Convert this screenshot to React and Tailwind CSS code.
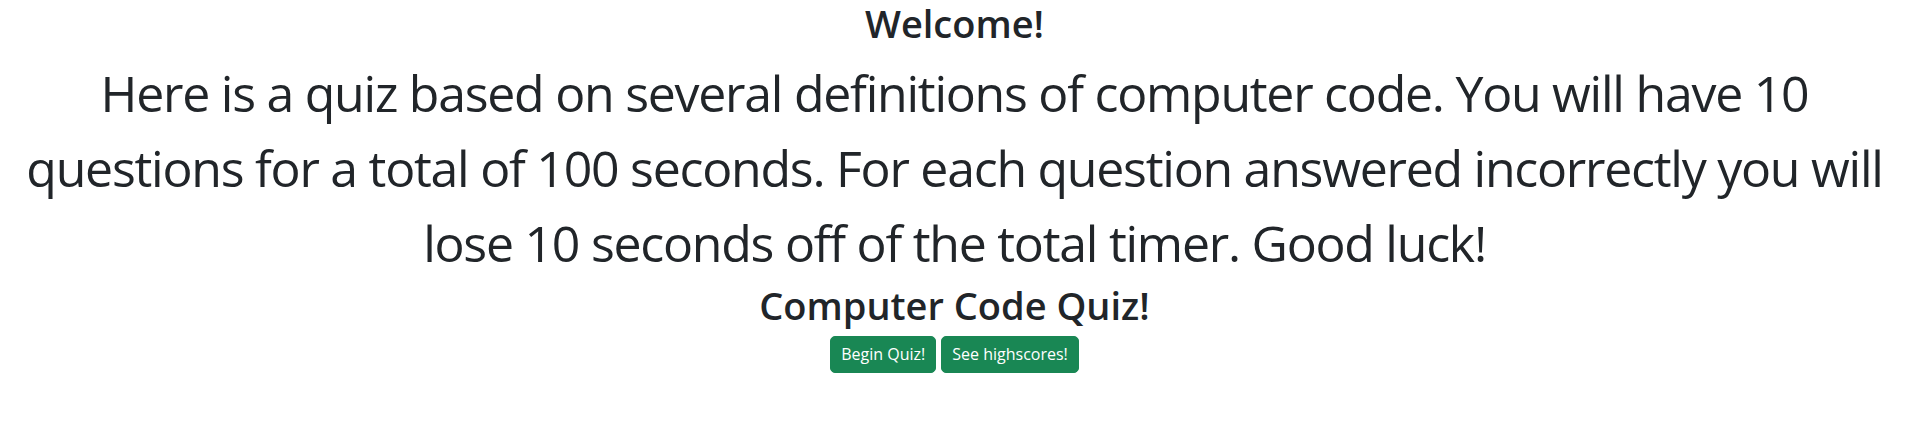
export default function App() {
  return (
    <div className="min-h-screen bg-white text-[#212529] text-center" style={{ fontFamily: '"Open Sans", "Noto Sans", sans-serif' }}>
      <h2 className="pt-[1px] text-[38px] leading-[45px] font-semibold">Welcome!</h2>
      <p className="mt-[10px] text-[50px] leading-[75px] tracking-[-0.025em]">
        Here is a quiz based on several definitions of computer code. You will have 10
        <br />
        questions for a total of 100 seconds. For each question answered incorrectly you will
        <br />
        lose 10 seconds off of the total timer. Good luck!
      </p>
      <h3 className="mt-[2px] text-[38px] leading-[45px] font-semibold">Computer Code Quiz!</h3>
      <div className="mt-[8px] flex justify-center gap-[5px]">
        <button className="px-[10px] py-[5px] border border-[#198754] bg-[#198754] text-white text-[16px] leading-[25px] rounded-[5px]">
          Begin Quiz!
        </button>
        <button className="px-[10px] py-[5px] border border-[#198754] bg-[#198754] text-white text-[16px] leading-[25px] rounded-[5px]">
          See highscores!
        </button>
      </div>
    </div>
  );
}
